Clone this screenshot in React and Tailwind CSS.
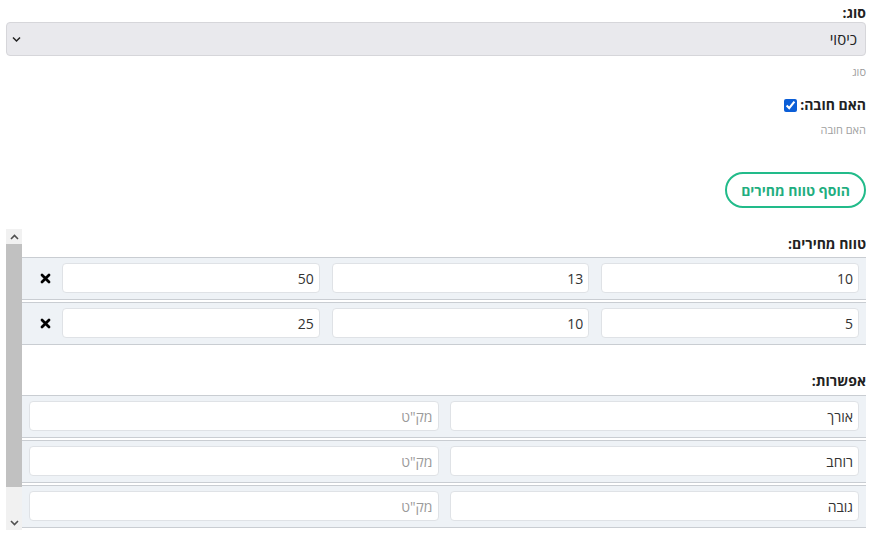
import React from "react";

const font = { fontFamily: '"Open Sans", "Liberation Sans", "DejaVu Sans", sans-serif' };

const priceRanges = [
  ["10", "13", "50"],
  ["5", "10", "25"],
];

const options = ["אורך", "רוחב", "גובה"];

const Field = ({ value, placeholder }) => (
  <input
    readOnly
    value={value}
    placeholder={placeholder}
    className="h-[30px] w-full min-w-0 rounded-[4px] border border-[#dfe2e6] bg-white px-[5px] text-right text-[14px] text-[#333] placeholder:text-[#9a9a9a] outline-none"
    style={font}
  />
);

const Row = ({ children, className = "" }) => (
  <div
    className={`mb-[2px] flex items-center border-y border-[#c9cdd2] bg-[#eef2f6] pt-[5px] pb-[6px] pr-[7px] ${className}`}
  >
    {children}
  </div>
);

// fake classic scrollbar (drawn, sits on the left in rtl)
const Scrollbar = () => (
  <div dir="ltr" className="flex w-[16px] shrink-0 flex-col bg-[#f1f1f1]">
    <div className="flex h-[15px] items-center justify-center">
      <svg width="9" height="6" viewBox="0 0 9 6">
        <path d="M1 5 L4.5 1.5 L8 5" fill="none" stroke="#505050" strokeWidth="1.6" />
      </svg>
    </div>
    <div className="h-[243px] bg-[#c1c1c1]" />
    <div className="flex-1" />
    <div className="flex h-[15px] items-center justify-center">
      <svg width="9" height="6" viewBox="0 0 9 6">
        <path d="M1 1 L4.5 4.5 L8 1" fill="none" stroke="#505050" strokeWidth="1.6" />
      </svg>
    </div>
  </div>
);

const RemoveIcon = () => (
  <svg width="11" height="11" viewBox="0 0 11 11">
    <path d="M2 2 L9 9 M9 2 L2 9" stroke="#000" strokeWidth="2.8" strokeLinecap="round" />
  </svg>
);

const App = () => {
  return (
    <div dir="rtl" className="min-h-[543px] bg-white pl-[6px] pr-2 text-[#222]" style={font}>
      {/* Type */}
      <div className="pt-[5px]">
        <label className="block text-[14px] font-bold leading-[16px]">סוג:</label>
        <div className="mt-[1px] flex h-[34px] items-center justify-between rounded-[4px] border border-[#d6d6da] bg-[#e9e9ed] pl-[5px] pr-2">
          <span className="text-[15px]">כיסוי</span>
          <svg width="9" height="8" viewBox="0 0 9 8">
            <path d="M1 2.5 L4.5 6 L8 2.5" fill="none" stroke="#222" strokeWidth="1.5" />
          </svg>
        </div>
        <div className="mt-[10px] text-[11px] leading-[12px] text-[#a0a0a0]">סוג</div>
      </div>

      {/* Required */}
      <div className="mt-[19px]">
        <div className="flex items-center gap-[3px]">
          <label className="text-[14px] font-bold leading-[16px]">האם חובה:</label>
          <input type="checkbox" readOnly checked className="m-0 h-[13px] w-[13px] accent-[#0b5ed7]" />
        </div>
        <div className="mt-[11px] text-[11px] leading-[12px] text-[#a0a0a0]">האם חובה</div>
      </div>

      {/* Add button */}
      <div className="mt-[36px] flex">
        <button className="h-[36px] w-[141px] rounded-[18px] border-2 border-[#22bb8a] text-[14px] font-bold text-[#1fae80]">
          הוסף טווח מחירים
        </button>
      </div>

      {/* Scroll area */}
      <div className="mt-[21px] flex h-[301px] overflow-hidden">
        <div className="min-w-0 flex-1">
          <div className="pt-[7px] text-[14px] font-bold leading-[16px]">טווח מחירים:</div>
          <div className="mt-[5px]">
            {priceRanges.map((r, i) => (
              <Row key={i}>
                <div className="grid flex-1 grid-cols-3 gap-[12px]">
                  {r.map((v, j) => (
                    <Field key={j} value={v} />
                  ))}
                </div>
                <div className="flex w-[40px] shrink-0 items-center justify-center pl-[6px]">
                  <RemoveIcon />
                </div>
              </Row>
            ))}
          </div>

          <div className="mt-[28px] text-[14px] font-bold leading-[16px]">אפשרות:</div>
          <div className="mt-[6px]">
            {options.map((o) => (
              <Row key={o} className="pl-[7px]">
                <div className="grid flex-1 grid-cols-2 gap-[11px]">
                  <Field value={o} />
                  <Field value="" placeholder={'מק"ט'} />
                </div>
              </Row>
            ))}
          </div>
        </div>
        <Scrollbar />
      </div>
    </div>
  );
};

export default App;
